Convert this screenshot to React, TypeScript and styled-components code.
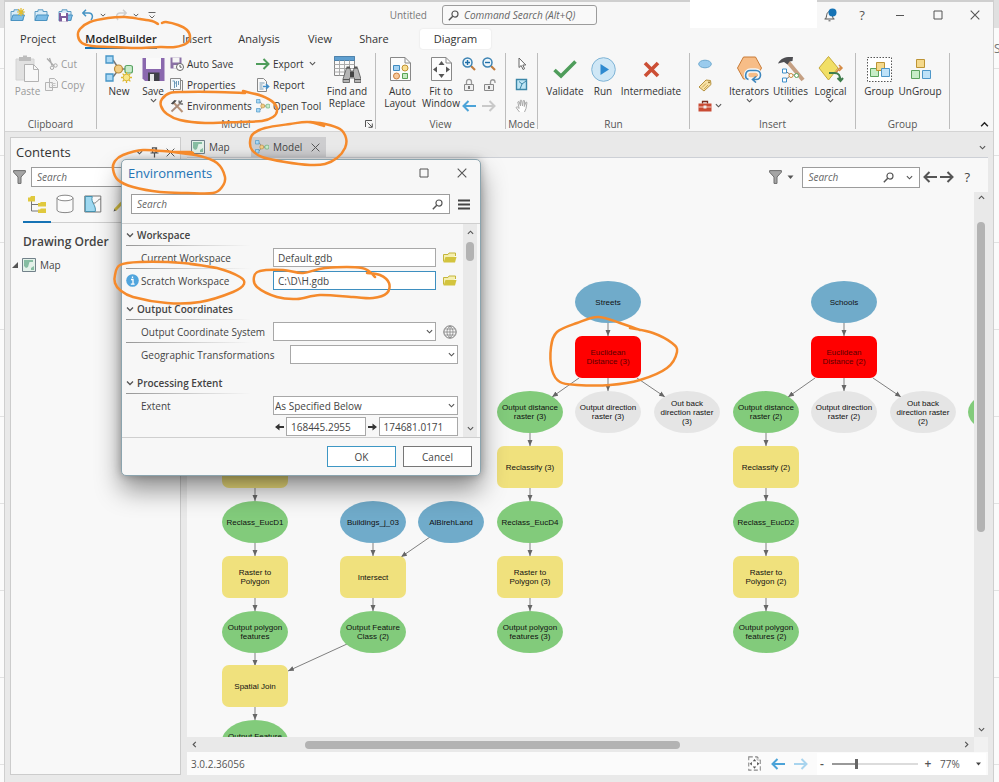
import React from "react";
import styled, { createGlobalStyle, css } from "styled-components";

const GlobalStyle = createGlobalStyle`
  * { box-sizing: border-box; }
  body { margin: 0; background: #f1f1f1; font-family: "Open Sans", "Noto Sans", sans-serif; font-size: 10px; line-height: 12px; color: #444; }
  button, input, select { font: inherit; color: inherit; margin: 0; padding: 0; }
  button { background: none; border: 0; cursor: pointer; }
  svg { display: block; flex: none; }
`;

/* ---------- Frame ---------- */

const Desktop = styled.div`
  position: relative;
  display: grid;
  grid-template-columns: 4px minmax(0, 1fr) 5px;
  height: 100vh;
  min-height: 600px;
  overflow: hidden;
`;

const Backdrop = styled.div`
  border-top: 28px solid #e0e0e0;
  background: repeating-linear-gradient(#fbfbfb 0 40px, #e2e2e2 40px 41px, #fbfbfb 41px 87px);
  overflow: hidden;
  color: #777;
  font-size: 12px;
  padding-top: 15px;
`;

const Window = styled.div`
  display: flex;
  flex-direction: column;
  min-width: 0;
  min-height: 0;
  background: #e9e9e9;
  border: solid #cfcfcf;
  border-width: 2px 1px 0;
`;

const TitleBar = styled.header`
  display: flex;
  align-items: center;
  height: 26px;
  background: #f7f7f7;
  padding-left: 5px;
  flex: none;
`;

const QuickAccess = styled.div`
  display: flex;
  align-items: center;
  gap: 9px;
  width: 387px;
`;

const QuickButton = styled.button`
  display: flex;
  align-items: center;
  gap: 6px;
`;

const DocumentName = styled.span`
  font-size: 10px;
  color: #777;
  width: 44px;
  text-align: right;
  white-space: nowrap;
`;

const SearchBox = styled.label<{ $rounded?: boolean }>`
  display: flex;
  align-items: center;
  gap: 5px;
  min-width: 0;
  height: 20px;
  padding: 0 6px 0 5px;
  background: #fff;
  border: 1px solid #9c9c9c;
  ${(p) => p.$rounded && css`border-radius: 3px; background: #f9f9f9;`}
  input {
    flex: 1;
    min-width: 0;
    width: 0;
    border: 0;
    outline: 0;
    background: none;
  }
  input::placeholder { font-style: italic; color: #666; opacity: 1; }
`;

const CommandSearch = styled(SearchBox)`
  flex: none;
  width: 155px;
  margin-left: 4px;
`;

const TitleSpacer = styled.div`
  flex: none;
  width: 11px;
`;

const AccountBlank = styled.div`
  align-self: stretch;
  margin: -2px auto 0 93px;
  width: 127px;
  flex: none;
  background: #fff;
`;

const WindowButtons = styled.div`
  display: flex;
  align-items: center;
  color: #555;
`;

const WindowButton = styled.button<{ $width: number }>`
  display: flex;
  justify-content: center;
  width: ${(p) => p.$width}px;
  font-size: 13px;
`;

const TabRow = styled.nav`
  display: flex;
  align-items: flex-start;
  height: 22px;
  background: #f7f7f7;
  padding: 1px 0 0 5px;
  flex: none;
`;

const RibbonTab = styled.button<{ $width: number; $active?: boolean; $context?: boolean }>`
  width: ${(p) => p.$width}px;
  height: 20px;
  font-size: 11px;
  white-space: nowrap;
  display: flex;
  justify-content: center;
  color: #333;
  span {
    display: block;
    line-height: 19px;
    height: 20px;
    border-bottom: 2px solid transparent;
    ${(p) => p.$active && css`font-weight: 600; color: #222; border-color: #1673b5;`}
  }
  ${(p) => p.$context && css`background: #fff; border-radius: 3px; box-shadow: 0 0 2px #ddd; margin-left: 12px;`}
`;

/* ---------- Ribbon ---------- */

const Ribbon = styled.div`
  display: flex;
  height: 82px;
  flex: none;
  background: #f7f7f7;
  border-bottom: 1px solid #d4d4d4;
`;

const Group = styled.section<{ $width: number }>`
  display: flex;
  flex-direction: column;
  flex: none;
  width: ${(p) => p.$width}px;
  border-right: 1px solid #bdbdbd;
  margin: 3px 0 2px;
`;

const GroupBody = styled.div<{ $indent: number }>`
  display: flex;
  height: 66px;
  padding-left: ${(p) => p.$indent}px;
`;

const GroupName = styled.div`
  position: relative;
  line-height: 10px;
  text-align: center;
  color: #555;
  button { position: absolute; right: 2px; top: 1px; }
`;

const BigButton = styled.button<{ $width: number; $muted?: boolean }>`
  display: flex;
  flex-direction: column;
  align-items: center;
  flex: none;
  width: ${(p) => p.$width}px;
  color: ${(p) => (p.$muted ? "#9a9a9a" : "#333")};
`;

const BigIcon = styled.span`
  display: flex;
  align-items: center;
  justify-content: center;
  height: 32px;
`;

const BigLabel = styled.span`
  white-space: pre;
  line-height: 12px;
`;

const SmallColumn = styled.div<{ $width: number }>`
  flex: none;
  width: ${(p) => p.$width}px;
`;

const SmallButton = styled.button<{ $muted?: boolean; $gap?: number }>`
  display: flex;
  align-items: center;
  gap: ${(p) => p.$gap ?? 3}px;
  height: 21px;
  white-space: nowrap;
  color: ${(p) => (p.$muted ? "#9a9a9a" : "#333")};
`;

const RibbonEnd = styled.div`
  display: flex;
  flex: 1;
  align-items: flex-end;
  justify-content: flex-end;
  padding: 0 4px 2px 0;
`;

/* ---------- Workspace ---------- */

const Workspace = styled.main`
  display: grid;
  grid-template-columns: 171px minmax(0, 1fr);
  gap: 6px;
  flex: 1;
  min-height: 0;
  padding: 5px 5px 7px 5px;
`;

const Panel = styled.aside`
  background: #f8f8f8;
  border: 1px solid #cccccc;
  min-width: 0;
`;

const PanelTitle = styled.div`
  display: flex;
  align-items: center;
  height: 28px;
  padding: 0 5px;
  gap: 7px;
  font-size: 13px;
  color: #333;
  h2 { font: inherit; margin: 0; flex: 1; }
`;

const PanelSearch = styled.div`
  display: flex;
  align-items: center;
  gap: 5px;
  padding: 1px 4px 0 2px;
  label { flex: 1; }
`;

const PanelTabs = styled.div`
  display: flex;
  height: 36px;
  margin-left: 12px;
  border-bottom: 1px solid #cfcfcf;
`;

const PanelTab = styled.button<{ $active?: boolean }>`
  display: flex;
  justify-content: center;
  align-items: center;
  width: 28px;
  height: 36px;
  border-bottom: 2px solid ${(p) => (p.$active ? "#1673b5" : "transparent")};
`;

const PanelHeading = styled.h3`
  margin: 11px 0 8px 12px;
  font-size: 12px;
  line-height: 16px;
  font-weight: 600;
  color: #444;
`;

const TreeRow = styled.div`
  display: flex;
  align-items: center;
  gap: 4px;
  height: 14px;
  padding-left: 1px;
`;

const DocumentArea = styled.div`
  display: flex;
  flex-direction: column;
  min-width: 0;
  min-height: 0;
`;

const DocumentTabs = styled.div`
  display: flex;
  align-items: stretch;
  height: 21px;
  flex: none;
  border-bottom: 1px solid #cdd0d6;
  padding-right: 2px;
`;

const DocumentTab = styled.button<{ $width: number; $active?: boolean }>`
  display: flex;
  align-items: center;
  gap: 4px;
  width: ${(p) => p.$width}px;
  padding-left: 4px;
  background: ${(p) => (p.$active ? "#cdcdcf" : "none")};
`;

const TabsMenu = styled.button`
  margin-left: auto;
  display: flex;
  align-items: center;
`;

const ViewToolbar = styled.div`
  display: flex;
  align-items: center;
  justify-content: flex-end;
  height: 34px;
  flex: none;
  background: #f8f8f8;
  padding: 4px 18px 0 0;
  gap: 3px;
  label { width: 118px; height: 21px; margin-left: 5px; }
`;

const ToolButton = styled.button`
  display: flex;
  align-items: center;
  gap: 5px;
  margin-left: 7px;
  font-size: 13px;
`;

const ViewBody = styled.div`
  display: grid;
  grid-template-columns: minmax(0, 1fr) 14px;
  grid-template-rows: minmax(0, 1fr) 15px;
  flex: 1;
  min-height: 0;
  background: #f1f1f1;
`;

const Canvas = styled.div`
  position: relative;
  overflow: hidden;
  background: #f8f8f8;
`;

const Track = styled.div<{ $horizontal?: boolean }>`
  display: flex;
  flex-direction: ${(p) => (p.$horizontal ? "row" : "column")};
  align-items: center;
  justify-content: space-between;
  background: #e9e9e9;
  padding: ${(p) => (p.$horizontal ? "0 4px" : "2px 0 4px")};
`;

const Rail = styled.div<{ $horizontal?: boolean; $before: number; $size: number }>`
  display: grid;
  flex: 1;
  ${(p) =>
    p.$horizontal
      ? css`grid-template-columns: ${p.$before}fr ${p.$size}fr ${100 - p.$before - p.$size}fr; height: 8px;`
      : css`grid-template-rows: ${p.$before}fr ${p.$size}fr ${100 - p.$before - p.$size}fr; width: 8px;`}
`;

const Thumb = styled.div<{ $horizontal?: boolean }>`
  ${(p) => (p.$horizontal ? css`grid-column: 2;` : css`grid-row: 2;`)}
  background: #b3b3b3;
  border-radius: 4px;
`;

const StatusBar = styled.footer`
  display: flex;
  align-items: center;
  height: 23px;
  flex: none;
  background: #fbfbfb;
  padding: 0 2px 0 4px;
  gap: 9px;
  color: #555;
  > span:first-child { flex: 1; }
`;

const ZoomControl = styled.div`
  display: flex;
  align-items: center;
  background: #fff;
  height: 22px;
  gap: 5px;
  font-weight: 600;
  button { width: 10px; font-size: 12px; }
  output { font-weight: 400; width: 31px; margin-left: 2px; }
  input {
    appearance: none;
    width: 86px;
    height: 10px;
    background: linear-gradient(to right, #999 28%, #dcdcdc 28%) center / 100% 2px no-repeat;
  }
  input::-webkit-slider-thumb {
    appearance: none;
    width: 3px;
    height: 10px;
    background: #666;
  }
`;

/* ---------- Diagram ---------- */

type Kind = "data" | "tool" | "failed" | "derived" | "optional";

const kindColor: Record<Kind, string> = {
  data: "#70abca",
  tool: "#f0e17d",
  failed: "#ff0000",
  derived: "#82cb7b",
  optional: "#e5e5e5",
};

const DiagramNode = styled.div<{ $x: number; $y: number; $kind: Kind }>`
  position: absolute;
  left: ${(p) => p.$x - 33}px;
  top: ${(p) => p.$y - 21}px;
  width: 66px;
  height: 42px;
  display: flex;
  align-items: center;
  justify-content: center;
  text-align: center;
  white-space: pre;
  font-family: "Liberation Sans", Arial, sans-serif;
  font-size: 8px;
  line-height: 9px;
  color: ${(p) => (p.$kind === "failed" ? "#5a0000" : "#111")};
  background: ${(p) => kindColor[p.$kind]};
  border-radius: ${(p) => (p.$kind === "tool" || p.$kind === "failed" ? "7px" : "50%")};
`;

const Edges = styled.svg`
  position: absolute;
  inset: 0;
  width: 100%;
  height: 100%;
`;

const nodes: [number, number, Kind, string][] = [
  [68, 275, "tool", "Reclassify"],
  [68, 330, "derived", "Reclass_EucD1"],
  [68, 385, "tool", "Raster to\nPolygon"],
  [68, 440, "derived", "Output polygon\nfeatures"],
  [68, 494, "tool", "Spatial Join"],
  [68, 549, "derived", "Output Feature\nClass"],
  [186, 330, "data", "Buildings_j_03"],
  [264, 330, "data", "AlBirehLand"],
  [186, 385, "tool", "Intersect"],
  [186, 440, "derived", "Output Feature\nClass (2)"],
  [421, 110, "data", "Streets"],
  [421, 165, "failed", "Euclidean\nDistance (3)"],
  [343, 220, "derived", "Output distance\nraster (3)"],
  [421, 220, "optional", "Output direction\nraster (3)"],
  [500, 220, "optional", "Out back\ndirection raster\n(3)"],
  [343, 275, "tool", "Reclassify (3)"],
  [343, 330, "derived", "Reclass_EucD4"],
  [343, 385, "tool", "Raster to\nPolygon (3)"],
  [343, 440, "derived", "Output polygon\nfeatures (3)"],
  [657, 110, "data", "Schools"],
  [657, 165, "failed", "Euclidean\nDistance (2)"],
  [579, 220, "derived", "Output distance\nraster (2)"],
  [657, 220, "optional", "Output direction\nraster (2)"],
  [736, 220, "optional", "Out back\ndirection raster\n(2)"],
  [579, 275, "tool", "Reclassify (2)"],
  [579, 330, "derived", "Reclass_EucD2"],
  [579, 385, "tool", "Raster to\nPolygon (2)"],
  [579, 440, "derived", "Output polygon\nfeatures (2)"],
  [814, 220, "derived", ""],
];

const down = (x: number, y: number): number[] => [x, y + 20, x, y + 34];

const edges: number[][] = [
  ...[275, 330, 385, 440, 494].map((y) => down(68, y)),
  ...[330, 385].map((y) => down(186, y)),
  ...[220, 275, 330, 385].map((y) => down(343, y)),
  ...[220, 275, 330, 385].map((y) => down(579, y)),
  ...[110, 165].map((y) => down(421, y)),
  ...[110, 165].map((y) => down(657, y)),
  [243, 345, 214, 365],
  [160, 452, 101, 479],
  [392, 186, 365, 205],
  [450, 186, 478, 205],
  [628, 186, 601, 205],
  [686, 186, 714, 205],
];

/* ---------- Dialog ---------- */

const Dialog = styled.section`
  position: absolute;
  left: 121px;
  top: 159px;
  width: 360px;
  display: flex;
  flex-direction: column;
  background: #f7f7f7;
  border: 1px solid #8ba4ae;
  border-radius: 5px;
  box-shadow: 0 14px 26px rgba(0, 0, 0, 0.42), 0 0 10px rgba(0, 0, 0, 0.25);
`;

const DialogHeader = styled.div`
  display: flex;
  align-items: center;
  height: 26px;
  padding: 0 13px 0 6px;
  h2 { font-size: 13px; font-weight: 400; color: #2474b5; margin: 0; flex: 1; }
  button + button { margin-left: 28px; }
`;

const DialogSearch = styled.div`
  display: flex;
  align-items: center;
  gap: 8px;
  padding: 8px 10px 9px 9px;
  border-bottom: 1px solid #cfcfcf;
  label { flex: 1; }
`;

const DialogBody = styled.div`
  display: flex;
  padding-right: 3px;
  border-bottom: 1px solid #cfcfcf;
`;

const Settings = styled.div`
  flex: 1;
  min-width: 0;
  padding-left: 4px;
`;

const fadingLine = css`
  background: linear-gradient(to right, #969696, #d5d5d5 60%, transparent) left bottom / 125px 1px no-repeat;
`;

const SectionTitle = styled.h3`
  display: flex;
  align-items: center;
  gap: 3px;
  height: 22px;
  margin: 0;
  font-size: 10px;
  font-weight: 600;
  color: #444;
  ${fadingLine}
  div + & { margin-top: 6px; }
`;

const SettingRow = styled.div<{ $wide?: boolean; $line?: boolean }>`
  display: flex;
  align-items: center;
  height: 23px;
  padding-right: 5px;
  ${(p) => p.$line && fadingLine}
  > label { display: flex; align-items: center; gap: 2px; flex: none; width: ${(p) => (p.$wide ? 164 : 147)}px; padding-left: 15px; white-space: nowrap; }
`;

const InfoLabel = styled.label`
  && { padding-left: 0; }
`;

const Field = styled.input<{ $focus?: boolean }>`
  flex: 1;
  min-width: 0;
  width: 0;
  height: 19px;
  padding: 0 4px;
  background: #fff;
  border: 1px solid ${(p) => (p.$focus ? "#3e8fc0" : "#a8a8a8")};
  outline: 0;
`;

const SelectWrap = styled.div`
  display: grid;
  flex: 1;
  min-width: 0;
  align-items: center;
  > * { grid-area: 1 / 1; }
  > svg { justify-self: end; margin-right: 3px; pointer-events: none; }
  select {
    appearance: none;
    width: 100%;
    height: 19px;
    padding: 0 1px;
    background: #fff;
    border: 1px solid #a8a8a8;
    border-radius: 0;
  }
`;

const RowButton = styled.button`
  display: flex;
  justify-content: center;
  width: 22px;
  padding-left: 5px;
`;

const ExtentPair = styled.div`
  display: flex;
  align-items: center;
  gap: 2px;
  padding: 0 5px 1px 149px;
`;

const DialogTrack = styled(Track)`
  width: 14px;
  padding: 5px 0;
`;

const DialogActions = styled.div`
  display: flex;
  justify-content: flex-end;
  gap: 7px;
  padding: 8px 8px 8px;
`;

const ActionButton = styled.button<{ $primary?: boolean }>`
  width: 69px;
  height: 21px;
  background: #fff;
  border: 1px solid ${(p) => (p.$primary ? "#3e97c4" : "#777")};
`;

const Markup = styled.svg`
  position: absolute;
  left: 0;
  top: 0;
  pointer-events: none;
`;

/* ---------- Icons ---------- */

const Svg = ({ w = 14, h, box, children }: { w?: number; h?: number; box?: string; children: React.ReactNode }) => (
  <svg width={w} height={h ?? w} viewBox={box ?? `0 0 ${w} ${h ?? w}`} fill="none" aria-hidden="true">
    {children}
  </svg>
);

const Chevron = ({ up, dir, color = "#555", w = 7 }: { up?: boolean; dir?: "l" | "r"; color?: string; w?: number }) => (
  <Svg w={w} box="0 0 8 8">
    <path
      d={dir === "l" ? "M5.5 1 2.5 4l3 3" : dir === "r" ? "m2.5 1 3 3-3 3" : up ? "M1 5.5 4 2.5l3 3" : "m1 2.5 3 3 3-3"}
      stroke={color}
      strokeWidth="1.3"
    />
  </Svg>
);

const Close = ({ w = 10 }: { w?: number }) => (
  <Svg w={w} box="0 0 10 10"><path d="m.7.7 8.6 8.6M9.3.7.7 9.3" stroke="#555" strokeWidth="1.1" /></Svg>
);

const Magnifier = () => (
  <Svg w={11} box="0 0 12 12">
    <circle cx="7.6" cy="4.4" r="3.3" stroke="#555" strokeWidth="1.3" />
    <path d="M5.2 6.8.9 11.1" stroke="#555" strokeWidth="1.6" />
  </Svg>
);

const Arrow = ({ left, color, w = 14 }: { left?: boolean; color: string; w?: number }) => (
  <Svg w={w} h={12} box="0 0 14 12">
    <path d={left ? "M14 6H1.5M6.5 1l-5 5 5 5" : "M0 6h12.5M7.5 1l5 5-5 5"} stroke={color} strokeWidth="2" />
  </Svg>
);

const SolidArrow = ({ left }: { left?: boolean }) => (
  <Svg w={9} h={8}>
    <path d={left ? "M0 4 4.500.5V3H9v2H4.500v2.500Z" : "M9 4 4.500.5V3H0v2h4.500v2.500Z"} fill="#333" />
  </Svg>
);

const Funnel = () => (
  <Svg w={13} h={14} box="0 0 13 14">
    <path d="M.6.6h11.8v1.6L8 7v6.4H5V7L.6 2.2Z" fill="#a5a5a5" stroke="#6e6e6e" />
  </Svg>
);

const FolderCase = ({ sun, disk }: { sun?: boolean; disk?: boolean }) => (
  <Svg w={15} h={14} box="0 0 15 14">
    <path d="M1 12.500V3.500h3V1.800h5v1.700h4v9Z" fill="#d8ebf7" stroke="#5d9cc4" />
    <path d="M1 12.500 3 7h11.500l-2 5.500Z" fill="#7dbce6" stroke="#4b93c1" />
    {sun && <path d="M11 0v8M7 4h8M8.200 1.200l5.600 5.600M13.800 1.200 8.200 6.800" stroke="#e4bd2e" strokeWidth="1.200" />}
    {disk && <path d="M1 5h9v8.500H1Z" fill="#7d5d9c" />}
    {disk && <path d="M3 5h5v3H3ZM4 10h4v3.500H4Z" fill="#fff" />}
  </Svg>
);

const Undo = ({ flip, color }: { flip?: boolean; color: string }) => (
  <Svg w={12} h={12} box="0 0 12 12">
    <path
      d={flip ? "M8 .8 11.200 4 8 7.200M11 4H5C1.500 4 .5 8 3 11" : "M4 .8.8 4 4 7.200M1 4h6c3.500 0 4.500 4 2 7"}
      stroke={color}
      strokeWidth="1.500"
    />
  </Svg>
);

const Bell = () => (
  <Svg w={14} h={14}>
    <path d="M1.500 11h10M2.500 11C4 9 3 4 6.500 3.500 10 4 9 9 10.500 11M5.500 12.800h2" stroke="#555" />
    <circle cx="9.500" cy="4.500" r="4" fill="#1673b5" />
  </Svg>
);

const Paste = () => (
  <Svg w={25} h={28}>
    <path d="M1 4h18v21H1Z" fill="#e1e1e1" stroke="#d4d4d4" />
    <path d="M4 2h4V.5h4V2h4v4H4Z" fill="#bdbdbd" />
    <path d="M9.500 9.500h9l5 5v12h-14Z" fill="#f8f8f8" stroke="#b3b3b3" />
    <path d="M18.500 9.500v5h5" stroke="#b3b3b3" />
  </Svg>
);

const Scissors = () => (
  <Svg w={13}>
    <path d="M2 1.500 9 9M4.500 1 7 8.500" stroke="#aaa" strokeWidth="1.300" />
    <circle cx="10.500" cy="8.500" r="1.700" stroke="#aaa" />
    <circle cx="7" cy="10.800" r="1.700" stroke="#aaa" />
  </Svg>
);

const Copy = () => (
  <Svg w={13}>
    <path d="M.5 4.500h7v8h-7ZM4.500.5h5l3 3v6h-8Z" fill="#f3f3f3" stroke="#b5b5b5" />
    <path d="M6.500 5.500h4M6.500 7.500h4" stroke="#c5c5c5" />
  </Svg>
);

const ModelGlyph = ({ w = 14, sun }: { w?: number; sun?: boolean }) => (
  <Svg w={w} box="0 0 28 28">
    <path d="M8 5 14 14 8 22M14 14h8" stroke="#777" strokeWidth="1.500" />
    <path d="M1 1h7v7H1ZM1 19h7v7H1Z" fill="#a9d8f5" stroke="#4795c6" strokeWidth="1.300" />
    <circle cx="13.500" cy="14" r="4" fill="#f3cd84" stroke="#b98b3b" strokeWidth="1.200" />
    <rect x="20" y="10.500" width="7.500" height="7.500" rx="2" fill="#c8eccb" stroke="#5aa364" strokeWidth="1.200" />
    {sun && <path d="M21.500 17v11M16 22.500h11M17.600 18.600l7.800 7.800M25.400 18.600l-7.800 7.800" stroke="#e0b92e" strokeWidth="1.300" />}
    {sun && <circle cx="21.500" cy="22.500" r="3.300" fill="#f8e78a" stroke="#dcb83b" />}
  </Svg>
);

const Disk = () => (
  <Svg w={23} h={25}>
    <path d="M.5 1h22v23H3L.5 21.500Z" fill="#8a68ae" />
    <path d="M4 1h15v11H4Z" fill="#fafafa" />
    <path d="M6 15.500h11.500V24H6Z" fill="#3f3f46" />
    <path d="M8 17h4v7H8Z" fill="#e8e8e8" />
  </Svg>
);

const DiskClock = () => (
  <Svg w={14}>
    <path d="M.5.5h11v11h-11Z" fill="#8a70a5" />
    <path d="M2.500.5h7v5h-7ZM3.500 8h4v3.500h-4Z" fill="#f5f5f5" />
    <circle cx="10" cy="10" r="3.500" fill="#fff" stroke="#666" />
    <path d="M10 8v2.200h1.700" stroke="#555" />
  </Svg>
);

const PropertiesIcon = () => (
  <Svg w={14}>
    <path d="M3.500 2.500h9v11h-9Z" fill="#f9f9f9" stroke="#888" />
    <path d="M.5.5h10v11H.5Z" fill="#f4f8fb" stroke="#888" />
    <path d="M2.500 3h2v7M4 5h3M6.500 3v6M8.500 3v4" stroke="#6b98b8" />
  </Svg>
);

const Tools = () => (
  <Svg w={14}>
    <path d="m4 4 8.500 9" stroke="#b79378" strokeWidth="2" />
    <path d="M.8 4.800 4.500.9l2.200.6-3.600 4Z" fill="#4c4c4c" />
    <path d="M1.500 12.500 9.500 5" stroke="#a78c7c" strokeWidth="1.800" />
    <path d="M9 1.500c0 3 1.500 4 4 3.300M9.500 4.500l2.500-3" stroke="#666" strokeWidth="1.400" />
  </Svg>
);

const ReportIcon = () => (
  <Svg w={14}>
    <path d="M1.500.5h6l3 3v10h-9Z" fill="#f8f8f8" stroke="#888" />
    <path d="M3.500 5h5M3.500 7h3M3.500 9h3M3.500 11h4" stroke="#7a9cb3" />
    <path d="M7 8.500h5M10 6l2.700 2.500L10 11" stroke="#3f8fcb" strokeWidth="1.400" />
  </Svg>
);

const TableBinoculars = () => (
  <Svg w={28} h={28}>
    <path d="M1.500 1.500h20v19h-20Z" fill="#fafafa" stroke="#888" />
    <path d="M1.500 1.500h20v4h-20Z" fill="#5f9fd0" stroke="#4e83ad" />
    <path d="M6.500 5.500v15M11.500 5.500v15M16.500 5.500v15M1.500 9.500h20M1.500 13.500h20M1.500 17h20" stroke="#aaa" />
    <path d="m13.500 13-3.500 11v3.500h6.500V23h5v4.500H28V24l-3.500-11h-3.500l-.5 3h-3l-.5-3Z" fill="#b5b5b5" stroke="#555" strokeWidth=".8" />
    <path d="M13.500 11.500h3.500v2h-3.500ZM21 11.500h3.500v2H21Z" fill="#555" />
    <path d="M17 16.500h4v5.500h-4Z" fill="#444" />
    <path d="M10 24.500h6.500M21.500 24.500H28" stroke="#555" />
  </Svg>
);

const PageLayout = () => (
  <Svg w={23} h={26}>
    <path d="M1.500 1.500h14.500l5.500 5.500v17.500h-20Z" fill="#fcfcfc" stroke="#888" />
    <path d="M16 1.500V7h5.500" stroke="#888" />
    <path d="M4.500 9.500h6v5h-6Z" fill="#a4d2f3" stroke="#3f8bc0" />
    <circle cx="16" cy="12" r="3" fill="#fae093" stroke="#c09132" />
    <circle cx="7.500" cy="20" r="3" fill="#f8c99a" stroke="#c97f3f" />
    <path d="M13.500 17.500h5v5h-5Z" fill="#c5e9c1" stroke="#5aa357" />
  </Svg>
);

const PageFit = ({ w = 23, dashed }: { w?: number; dashed?: boolean }) => (
  <Svg w={w} h={dashed ? w : w + 3} box="0 0 23 26">
    <path d="M1.500 1.500h14.500l5.500 5.500v17.500h-20Z" fill="#fcfcfc" stroke="#888" strokeDasharray={dashed ? "7 4" : undefined} strokeWidth={dashed ? 1.800 : 1} />
    <path d="M16 1.500V7h5.500" stroke="#888" />
    <path d="m11.500 5 3 4h-6ZM11.500 22l3-4h-6ZM3 13.500l4-3v6ZM20 13.500l-4-3v6Z" fill="#555" />
  </Svg>
);

const ZoomGlass = ({ minus }: { minus?: boolean }) => (
  <Svg w={14}>
    <path d="m9 9 4 4" stroke="#c17b3c" strokeWidth="2.200" />
    <circle cx="5.500" cy="5.500" r="4.500" fill="#eef6fb" stroke="#3d83b3" strokeWidth="1.500" />
    <path d={minus ? "M3 5.500h5" : "M3 5.500h5M5.500 3v5"} stroke="#1f6fa8" strokeWidth="1.400" />
  </Svg>
);

const Lock = ({ open }: { open?: boolean }) => (
  <Svg w={14}>
    <path d={open ? "M8.500 6V4C8.500 1 13 1 13 4v1" : "M4.500 6V4c0-3.500 5-3.500 5 0v2"} stroke="#999" strokeWidth="1.300" />
    <path d="M2.500 6.500h9v6h-9Z" fill="#eee" stroke="#888" />
    <path d="M7 8v3" stroke="#555" strokeWidth="1.500" />
  </Svg>
);

const Pointer = () => (
  <Svg w={13}><path d="M4 1v9.500l2.200-2 1.800 4 1.600-.8-1.800-3.700h3Z" fill="#fff" stroke="#666" /></Svg>
);

const MapMini = () => (
  <Svg w={13}>
    <path d="M1.500 1.500h10v10h-10Z" fill="#bfe6f5" stroke="#3c87a8" strokeWidth="1.400" />
    <path d="M4 3.500 7 6l4-3M7 6l-2 5" stroke="#3c87a8" />
  </Svg>
);

const Hand = () => (
  <Svg w={14}>
    <path d="M4.500 13 1 8.500l1.200-.7 2 1.700L2.800 3 4 2.500 5.500 7 5.300 1.300h1.200L7.500 7l.8-5.500 1.200.2L9.300 7.500 11 3l1 .5-1 6-1.500 3.500" fill="#fff" stroke="#aaa" />
  </Svg>
);

const Check = () => (
  <Svg w={24} h={20}><path d="m1.500 11 6.500 6L22.500 2.500" stroke="#4f9d5b" strokeWidth="3.600" /></Svg>
);

const RunIcon = () => (
  <Svg w={25}>
    <circle cx="12.500" cy="12.500" r="11.800" fill="#cfe7f6" stroke="#7fb4d6" />
    <path d="m9.500 7 8.500 5.500L9.500 18Z" fill="#2f8ad0" />
  </Svg>
);

const Cross = () => (
  <Svg w={17}><path d="m2 2 13 13M15 2 2 15" stroke="#cc4f35" strokeWidth="3.600" /></Svg>
);

const Oval = () => (
  <Svg w={14}><ellipse cx="7" cy="7" rx="6.300" ry="3.800" fill="#9acbed" stroke="#6fa9cf" /></Svg>
);

const Tag = () => (
  <Svg w={14}>
    <path d="M1 9 8 2l4.500.5.5 4-7 6.500Z" fill="#f8e2a4" stroke="#b5913f" strokeLinejoin="round" />
    <path d="m4 9.500 4-4M6 11l4-4" stroke="#c9a458" />
    <circle cx="11" cy="4.300" r=".9" fill="#8d6c26" />
  </Svg>
);

const Toolbox = () => (
  <Svg w={14}>
    <path d="M4.500 4.500v-2h5v2" stroke="#7a2b1e" strokeWidth="1.300" />
    <path d="M.5 4.500h13v8H.5Z" fill="#c94b34" />
    <path d="M.5 8h13" stroke="#f4d0c8" /><path d="M5.500 6.500h3v3h-3Z" fill="#eee" />
  </Svg>
);

const Iterator = () => (
  <Svg w={27} h={28}>
    <path d="M7.500 2h12l6 11-6 11h-12l-6-11Z" fill="#f7bd87" stroke="#c87b37" />
    <rect x="10" y="15.500" width="14" height="9" rx="4.500" stroke="#f7f7f7" strokeWidth="4.500" />
    <path d="M12.500 24.500C8 23.500 9 15.500 14 15.500h6c6 0 6 9 0 9h-3M20 21.500l-3.500 3 3.500 3" stroke="#3e87bd" strokeWidth="1.600" />
  </Svg>
);

const Hammer = () => (
  <Svg w={28} h={28}>
    <path d="m11 7 15 18" stroke="#c5a083" strokeWidth="4" />
    <path d="M1 8.500C4 2.500 9 1.500 16 2l-.5 4-3 .5-2 3-3.500-2.500Z" fill="#4e4e52" />
    <path d="M9 16.500 14 20l-5 4.500M14 20h6" stroke="#777" />
    <path d="M5.500 14h4v4h-4ZM5.500 23h4v4h-4Z" fill="#fff" stroke="#3e8fc9" />
    <circle cx="14" cy="20.500" r="2" fill="#fff" stroke="#ce8b3b" /><circle cx="19.500" cy="20.500" r="2" fill="#fff" stroke="#58a55d" />
  </Svg>
);

const LogicalIcon = () => (
  <Svg w={26} h={28}>
    <path d="M10.500 1.500 20 13l-9.500 12L1 13Z" fill="#f1df66" stroke="#c5a93a" />
    <path d="M11 18h5c4 0 4-5 6-5h2M21 10l3 3-3 3" stroke="#d58b46" strokeWidth="1.500" />
    <path d="M11 18h5c5 0 6 2 6.500 8M19.500 23l3 3 2.500-3" stroke="#3f7d4c" strokeWidth="2" />
  </Svg>
);

const Blocks = ({ grouped }: { grouped?: boolean }) => (
  <Svg w={27} h={27}>
    {grouped && <path d="M1.500 1.500h24v24h-24Z" fill="#fff" stroke="#555" strokeDasharray="1.500 1.500" />}
    <path d={grouped ? "M4.500 12.500h8v8h-8Z" : "M4.500 14.500h8v8h-8Z"} fill="#c7edc8" stroke="#5aa35e" />
    <path d={grouped ? "M10.500 6.500h8v8h-8Z" : "M9.500 3.500h8v8h-8Z"} fill="#f5d98b" stroke="#bd9434" />
    <path d={grouped ? "M15.500 12.500h8v8h-8Z" : "M15.500 14.500h8v8h-8Z"} fill="#bfe2f8" stroke="#4e97c9" />
  </Svg>
);

const MapIcon = () => (
  <Svg w={14}>
    <path d="M.5.5h13v13H.5Z" fill="#e3f1e9" stroke="#72818a" />
    <path d="M2 2h9v2H7.500L6 9l-2 1-2-2ZM9 10l3-2v4H9Z" fill="#86bda2" />
  </Svg>
);

const Folder = () => (
  <Svg w={14} h={11}>
    <path d="M.5 9.500v-7H5l1-1.500h6.500v3" fill="#f5efb0" stroke="#c5b63b" />
    <path d="M.5 10.500 2.500 5h11l-1.500 5.500Z" fill="#d3c43e" />
  </Svg>
);

const Globe = () => (
  <Svg w={14}>
    <circle cx="7" cy="7" r="6.200" fill="#f5f5f5" stroke="#777" />
    <path d="M7 1v12M1 7h12M2 4h10M2 10h10M7 1C3 4 3 10 7 13M7 1c4 3 4 9 0 12" stroke="#888" strokeWidth=".8" />
  </Svg>
);

const Info = () => (
  <Svg w={13}>
    <circle cx="6.500" cy="6.500" r="6.300" fill="#51a5dd" />
    <path d="M5 5.500h2v4.500M4.800 10.200h3.800M6.500 2.500v1.500" stroke="#fff" strokeWidth="1.300" />
  </Svg>
);

const ContentsTree = () => (
  <Svg w={20} h={20}>
    <path d="M4.500 7v10h7M4.500 10.500h7" stroke="#777" />
    <path d="M1 3.500h2l1-1.500h4v5.500H1ZM11 9h2l.8-1H19v4.500h-8ZM11 15.500h2l.8-1H19V19h-8Z" fill="#e0c93e" />
  </Svg>
);

const Cylinder = () => (
  <Svg w={18} h={20}>
    <path d="M1 4v12c0 3.500 16 3.500 16 0V4" fill="#fafafa" stroke="#888" />
    <ellipse cx="9" cy="4" rx="8" ry="2.800" fill="#fff" stroke="#888" />
  </Svg>
);

const Selection = () => (
  <Svg w={18}>
    <path d="M.8 1h16v16H.8Z" fill="#fafafa" stroke="#777" />
    <path d="M1.300 1.500h7c-2 6 4 8 3 15h-10Z" fill="#9ed8f0" stroke="#4691ae" />
    <path d="M9 8c4 1 4-4 8-4" stroke="#777" />
  </Svg>
);

const Pencil = () => (
  <Svg w={16}><path d="M2 14 13 2.500" stroke="#d8c245" strokeWidth="3" /><path d="m.5 15.500 2.500-1L1.500 13Z" fill="#555" /></Svg>
);

const Pin = () => (
  <Svg w={9} h={11}><path d="M2.500.8h4v5h-4ZM.5 6h8M4.500 6v4.500M5.800 1v5" stroke="#555" strokeWidth="1.200" /></Svg>
);

const Square = () => <Svg w={10}><path d="M1 1h8v8H1Z" stroke="#555" /></Svg>;

const Menu = () => <Svg w={12} h={11}><path d="M0 1.500h12M0 5.500h12M0 9.500h12" stroke="#444" strokeWidth="2" /></Svg>;

const Caret = () => <Svg w={7} h={5}><path d="M.5.500h6l-3 3.500Z" fill="#555" /></Svg>;

const Expander = () => <Svg w={6}><path d="M6 0v6H0Z" fill="#555" /></Svg>;

const Launcher = () => (
  <Svg w={8}><path d="M.5 7V.500H7M2.500 2.500l4.500 4.500M7.300 3.500v3.800H3.500" stroke="#555" /></Svg>
);

/* ---------- Hand-drawn highlights ---------- */

const strokes: number[][][] = [
  [[158, 24], [152, 21], [140, 19], [125, 17], [108, 18], [90, 22], [80, 29], [78, 36], [82, 43], [92, 46], [110, 47], [135, 48], [160, 47], [175, 47], [187, 43], [190, 37], [187, 30], [178, 25], [166, 22], [162, 23]],
  [[245, 93], [215, 92], [185, 92], [170, 93], [162, 99], [161, 106], [167, 114], [180, 120], [205, 123], [240, 122], [262, 121], [273, 117], [277, 111], [274, 103], [262, 96], [243, 91]],
  [[324, 126], [308, 122], [290, 124], [265, 128], [253, 134], [250, 142], [252, 150], [262, 157], [285, 162], [310, 165], [325, 164], [337, 158], [345, 148], [346, 138], [340, 129], [325, 124], [310, 122]],
  [[193, 153], [190, 152], [173, 152], [143, 150], [123, 155], [115, 161], [113, 169], [118, 180], [133, 187], [160, 192], [187, 193], [213, 193], [222, 187], [225, 177], [217, 163], [200, 156], [173, 152]],
  [[217, 268], [183, 263], [140, 262], [120, 265], [115, 275], [115, 283], [120, 290], [133, 297], [167, 303], [200, 302], [233, 292], [244, 284], [240, 277], [217, 268], [190, 264]],
  [[375, 277], [362, 268], [325, 268], [303, 273], [283, 270], [260, 271], [254, 277], [257, 287], [277, 297], [297, 299], [320, 295], [353, 297], [373, 298], [387, 293], [389, 283], [380, 275], [367, 273]],
  [[640, 330], [620, 323], [598, 317], [577, 323], [557, 332], [551, 347], [552, 370], [560, 382], [577, 385], [610, 385], [640, 380], [667, 368], [677, 352], [672, 343], [653, 333], [630, 328]],
];

const smooth = (points: number[][]) =>
  points.slice(1).reduce((path, p, i) => {
    const a = points[Math.max(i - 1, 0)];
    const b = points[i];
    const d = points[Math.min(i + 2, points.length - 1)];
    return `${path} C${b[0] + (p[0] - a[0]) / 6} ${b[1] + (p[1] - a[1]) / 6} ${p[0] - (d[0] - b[0]) / 6} ${p[1] - (d[1] - b[1]) / 6} ${p[0]} ${p[1]}`;
  }, `M${points[0][0]} ${points[0][1]}`);

/* ---------- Composed parts ---------- */

type BigProps = { width: number; icon: React.ReactNode; label: string; muted?: boolean; drop?: boolean };

const Big = ({ width, icon, label, muted, drop }: BigProps) => (
  <BigButton $width={width} $muted={muted}>
    <BigIcon>{icon}</BigIcon>
    <BigLabel>{label}</BigLabel>
    {drop && <Chevron />}
  </BigButton>
);

const AppRibbon = () => (
  <Ribbon>
    <Group $width={92}>
      <GroupBody $indent={5}>
        <Big width={35} icon={<Paste />} label="Paste" muted />
        <SmallColumn $width={50}>
          <SmallButton $muted><Scissors />Cut</SmallButton>
          <SmallButton $muted><Copy />Copy</SmallButton>
        </SmallColumn>
      </GroupBody>
      <GroupName>Clipboard</GroupName>
    </Group>
    <Group $width={279}>
      <GroupBody $indent={5}>
        <Big width={34} icon={<ModelGlyph w={28} sun />} label="New" />
        <Big width={34} icon={<Disk />} label="Save" drop />
        <SmallColumn $width={86}>
          <SmallButton><DiskClock />Auto Save</SmallButton>
          <SmallButton><PropertiesIcon />Properties</SmallButton>
          <SmallButton><Tools />Environments</SmallButton>
        </SmallColumn>
        <SmallColumn $width={68}>
          <SmallButton><Arrow color="#4f9d5b" />Export&nbsp;<Chevron /></SmallButton>
          <SmallButton><ReportIcon />Report</SmallButton>
          <SmallButton><ModelGlyph />Open Tool</SmallButton>
        </SmallColumn>
        <Big width={46} icon={<TableBinoculars />} label={"Find and\nReplace"} />
      </GroupBody>
      <GroupName>Model<button aria-label="Model options"><Launcher /></button></GroupName>
    </Group>
    <Group $width={130}>
      <GroupBody $indent={4}>
        <Big width={40} icon={<PageLayout />} label={"Auto\nLayout"} />
        <Big width={42} icon={<PageFit />} label={"Fit to\nWindow"} />
        <SmallColumn $width={20}>
          <SmallButton aria-label="Zoom in"><ZoomGlass /></SmallButton>
          <SmallButton aria-label="Lock"><Lock /></SmallButton>
          <SmallButton aria-label="Previous extent"><Arrow left color="#4ba3d8" /></SmallButton>
        </SmallColumn>
        <SmallColumn $width={20}>
          <SmallButton aria-label="Zoom out"><ZoomGlass minus /></SmallButton>
          <SmallButton aria-label="Unlock"><Lock open /></SmallButton>
          <SmallButton aria-label="Next extent"><Arrow color="#c9c9c9" /></SmallButton>
        </SmallColumn>
      </GroupBody>
      <GroupName>View</GroupName>
    </Group>
    <Group $width={32}>
      <GroupBody $indent={9}>
        <SmallColumn $width={14}>
          <SmallButton aria-label="Select"><Pointer /></SmallButton>
          <SmallButton aria-label="Overview"><MapMini /></SmallButton>
          <SmallButton aria-label="Pan"><Hand /></SmallButton>
        </SmallColumn>
      </GroupBody>
      <GroupName>Mode</GroupName>
    </Group>
    <Group $width={152}>
      <GroupBody $indent={5}>
        <Big width={44} icon={<Check />} label="Validate" />
        <Big width={32} icon={<RunIcon />} label="Run" />
        <Big width={64} icon={<Cross />} label="Intermediate" />
      </GroupBody>
      <GroupName>Run</GroupName>
    </Group>
    <Group $width={166}>
      <GroupBody $indent={8}>
        <SmallColumn $width={30}>
          <SmallButton aria-label="Variable"><Oval /></SmallButton>
          <SmallButton aria-label="Label"><Tag /></SmallButton>
          <SmallButton aria-label="Tools"><Toolbox /><Chevron /></SmallButton>
        </SmallColumn>
        <Big width={42} icon={<Iterator />} label="Iterators" drop />
        <Big width={41} icon={<Hammer />} label="Utilities" drop />
        <Big width={39} icon={<LogicalIcon />} label="Logical" drop />
      </GroupBody>
      <GroupName>Insert</GroupName>
    </Group>
    <Group $width={94}>
      <GroupBody $indent={5}>
        <Big width={36} icon={<Blocks grouped />} label="Group" />
        <Big width={46} icon={<Blocks />} label="UnGroup" />
      </GroupBody>
      <GroupName>Group</GroupName>
    </Group>
    <RibbonEnd><button aria-label="Collapse ribbon"><Chevron up color="#222" w={9} /></button></RibbonEnd>
  </Ribbon>
);

const Diagram = () => (
  <Canvas>
    <Edges aria-hidden="true">
      <defs>
        <marker id="head" markerUnits="userSpaceOnUse" markerWidth="7" markerHeight="6" refX="6" refY="3" orient="auto">
          <path d="M0 .5 6 3 0 5.500Z" fill="#666" />
        </marker>
      </defs>
      {edges.map(([x1, y1, x2, y2], i) => (
        <line key={i} x1={x1} y1={y1} x2={x2} y2={y2} stroke="#808080" markerEnd="url(#head)" />
      ))}
    </Edges>
    {nodes.map(([x, y, kind, text]) => (
      <DiagramNode key={`${x}-${y}`} $x={x} $y={y} $kind={kind}>{text}</DiagramNode>
    ))}
  </Canvas>
);

const EnvironmentsDialog = () => (
  <Dialog role="dialog" aria-label="Environments">
    <DialogHeader>
      <h2>Environments</h2>
      <button aria-label="Maximize dialog"><Square /></button>
      <button aria-label="Close dialog"><Close /></button>
    </DialogHeader>
    <DialogSearch>
      <SearchBox><input aria-label="Search environments" placeholder="Search" /><Magnifier /></SearchBox>
      <button aria-label="Menu"><Menu /></button>
    </DialogSearch>
    <DialogBody>
      <Settings>
        <SectionTitle><Chevron w={8} />Workspace</SectionTitle>
        <SettingRow $line>
          <label htmlFor="current">Current Workspace</label>
          <Field id="current" defaultValue="Default.gdb" />
          <RowButton aria-label="Browse current workspace"><Folder /></RowButton>
        </SettingRow>
        <SettingRow>
          <InfoLabel htmlFor="scratch"><Info />Scratch Workspace</InfoLabel>
          <Field id="scratch" defaultValue="C:\D\H.gdb" $focus />
          <RowButton aria-label="Browse scratch workspace"><Folder /></RowButton>
        </SettingRow>
        <SectionTitle><Chevron w={8} />Output Coordinates</SectionTitle>
        <SettingRow $line>
          <label htmlFor="system">Output Coordinate System</label>
          <SelectWrap><select id="system"><option></option></select><Chevron /></SelectWrap>
          <RowButton aria-label="Choose coordinate system"><Globe /></RowButton>
        </SettingRow>
        <SettingRow $wide>
          <label htmlFor="transform">Geographic Transformations</label>
          <SelectWrap><select id="transform"><option></option></select><Chevron /></SelectWrap>
        </SettingRow>
        <SectionTitle><Chevron w={8} />Processing Extent</SectionTitle>
        <SettingRow>
          <label htmlFor="extent">Extent</label>
          <SelectWrap><select id="extent"><option>As Specified Below</option></select><Chevron /></SelectWrap>
        </SettingRow>
        <ExtentPair>
          <SolidArrow left />
          <Field aria-label="Left" defaultValue="168445.2955" />
          <SolidArrow />
          <Field aria-label="Right" defaultValue="174681.0171" />
        </ExtentPair>
      </Settings>
      <DialogTrack>
        <Chevron up />
        <Rail $before={3} $size={10}><Thumb /></Rail>
        <Chevron />
      </DialogTrack>
    </DialogBody>
    <DialogActions>
      <ActionButton $primary>OK</ActionButton>
      <ActionButton>Cancel</ActionButton>
    </DialogActions>
  </Dialog>
);

export default function App() {
  return (
    <Desktop>
      <GlobalStyle />
      <Backdrop />
      <Window>
        <TitleBar>
          <QuickAccess>
            <QuickButton aria-label="New project"><FolderCase sun /></QuickButton>
            <QuickButton aria-label="Open project"><FolderCase /></QuickButton>
            <QuickButton aria-label="Save project"><FolderCase disk /></QuickButton>
            <QuickButton aria-label="Undo"><Undo color="#4593c4" /><Chevron w={6} /></QuickButton>
            <QuickButton aria-label="Redo"><Undo flip color="#cfcfcf" /><Chevron w={6} /></QuickButton>
            <QuickButton aria-label="Customize"><Svg w={8} h={9}><path d="M.5 1.500h7M1.500 4.500l2.500 2.500 2.500-2.500" stroke="#666" /></Svg></QuickButton>
          </QuickAccess>
          <DocumentName>Untitled</DocumentName>
          <TitleSpacer />
          <CommandSearch as="label" $rounded><Magnifier /><input aria-label="Command Search" placeholder="Command Search (Alt+Q)" /></CommandSearch>
          <AccountBlank />
          <WindowButtons>
            <WindowButton $width={26} aria-label="Notifications"><Bell /></WindowButton>
            <WindowButton $width={38} aria-label="Help">?</WindowButton>
            <WindowButton $width={38} aria-label="Minimize"><Svg w={10}><path d="M1 5.500h8" stroke="#555" /></Svg></WindowButton>
            <WindowButton $width={38} aria-label="Maximize"><Square /></WindowButton>
            <WindowButton $width={36} aria-label="Close"><Close /></WindowButton>
          </WindowButtons>
        </TitleBar>
        <TabRow>
          <RibbonTab $width={56}><span>Project</span></RibbonTab>
          <RibbonTab $width={110} $active><span>ModelBuilder</span></RibbonTab>
          <RibbonTab $width={42}><span>Insert</span></RibbonTab>
          <RibbonTab $width={82}><span>Analysis</span></RibbonTab>
          <RibbonTab $width={40}><span>View</span></RibbonTab>
          <RibbonTab $width={68}><span>Share</span></RibbonTab>
          <RibbonTab $width={71} $context><span>Diagram</span></RibbonTab>
        </TabRow>
        <AppRibbon />
        <Workspace>
          <Panel>
            <PanelTitle>
              <h2>Contents</h2>
              <Chevron /><Pin /><Close w={9} />
            </PanelTitle>
            <PanelSearch>
              <Funnel />
              <SearchBox><input aria-label="Search contents" placeholder="Search" /></SearchBox>
            </PanelSearch>
            <PanelTabs>
              <PanelTab $active aria-label="Drawing order"><ContentsTree /></PanelTab>
              <PanelTab aria-label="Data source"><Cylinder /></PanelTab>
              <PanelTab aria-label="Selection"><Selection /></PanelTab>
              <PanelTab aria-label="Editing"><Pencil /></PanelTab>
            </PanelTabs>
            <PanelHeading>Drawing Order</PanelHeading>
            <TreeRow><Expander /><MapIcon />Map</TreeRow>
          </Panel>
          <DocumentArea>
            <DocumentTabs>
              <DocumentTab $width={64}><MapIcon />Map</DocumentTab>
              <DocumentTab $width={75} $active><ModelGlyph />Model&nbsp;&nbsp;<Close w={9} /></DocumentTab>
              <TabsMenu aria-label="Open views"><Chevron /></TabsMenu>
            </DocumentTabs>
            <ViewToolbar>
              <ToolButton aria-label="Filter"><Funnel /><Caret /></ToolButton>
              <SearchBox><input aria-label="Search diagram" placeholder="Search" /><Magnifier />&nbsp;<Chevron /></SearchBox>
              <button aria-label="Previous result"><Arrow left color="#555" /></button>
              <button aria-label="Next result"><Arrow color="#555" /></button>
              <ToolButton aria-label="View help">?</ToolButton>
            </ViewToolbar>
            <ViewBody>
              <Diagram />
              <Track>
                <Chevron up />
                <Rail $before={4} $size={59}><Thumb /></Rail>
                <Chevron />
              </Track>
              <Track $horizontal>
                <Chevron dir="l" />
                <Rail $horizontal $before={14} $size={49}><Thumb $horizontal /></Rail>
                <Chevron dir="r" />
              </Track>
            </ViewBody>
            <StatusBar>
              <span>3.0.2.36056</span>
              <button aria-label="Fit to window"><PageFit w={15} dashed /></button>
              <button aria-label="Back"><Arrow left color="#4ba3d8" /></button>
              <button aria-label="Forward"><Arrow color="#a8d4ee" /></button>
              <ZoomControl>
                <button aria-label="Zoom out">-</button>
                <input type="range" aria-label="Zoom" min={0} max={100} defaultValue={28} />
                <button aria-label="Zoom in">+</button>
                <output>77%</output>
                <button aria-label="Zoom levels"><Svg w={5} h={4}><path d="M0 .500h5L2.500 3.500Z" fill="#444" /></Svg></button>
              </ZoomControl>
            </StatusBar>
          </DocumentArea>
        </Workspace>
      </Window>
      <Backdrop>S</Backdrop>
      <EnvironmentsDialog />
      <Markup width="700" height="400" viewBox="0 0 700 400" fill="none" stroke="#f58a2c" strokeWidth="2.500" strokeLinecap="round" strokeLinejoin="round" aria-hidden="true">
        {strokes.map((points, i) => <path key={i} d={smooth(points)} />)}
      </Markup>
    </Desktop>
  );
}
